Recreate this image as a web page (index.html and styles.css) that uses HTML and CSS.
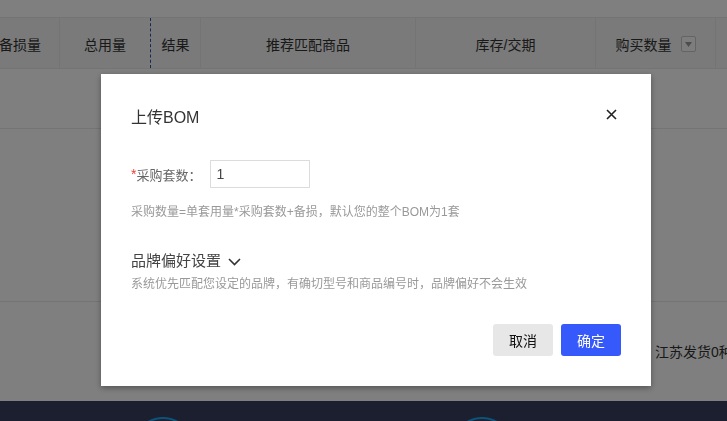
FILE: index.html
```html
<!DOCTYPE html>
<html lang="zh">
<head>
<meta charset="utf-8">
<title>上传BOM</title>
<link rel="stylesheet" href="styles.css">
</head>
<body>
<div class="page">
  <div class="topbar"></div>
  <div class="table">
    <div class="thead">
      <div class="th c1">备损量</div>
      <div class="th c2">总用量</div>
      <div class="th c3">结果</div>
      <div class="th c4">推荐匹配商品</div>
      <div class="th c5">库存/交期</div>
      <div class="th c6">购买数量 <span class="dd"><svg width="7" height="5" viewBox="0 0 7 5"><path d="M0 0H7L3.5 5Z" fill="#9a9a9a"/></svg></span></div>
      <div class="th c7"></div>
    </div>
    <div class="row r1"></div>
    <div class="row r2"></div>
    <div class="row r3"><span class="ship">江苏发货0种</span></div>
  </div>
  <div class="footer">
    <span class="ring"></span>
    <span class="ring"></span>
  </div>
</div>

<div class="mask"></div>
<div class="modal">
  <div class="m-head">
    <div class="m-title">上传BOM</div>
    <button class="m-close" aria-label="关闭"><svg width="11" height="11" viewBox="0 0 11 11"><path d="M1 1L10 10M10 1L1 10" stroke="#222" stroke-width="1.6" fill="none"/></svg></button>
  </div>
  <div class="m-field">
    <span class="req">*</span><span class="lbl">采购套数：</span>
    <div class="inp">1</div>
  </div>
  <div class="hint h1">采购数量=单套用量*采购套数+备损，默认您的整个BOM为1套</div>
  <div class="brand">品牌偏好设置<svg class="chev" width="13" height="8" viewBox="0 0 13 8"><path d="M1 1L6.5 6.5L12 1" stroke="#333" stroke-width="1.6" fill="none"/></svg></div>
  <div class="hint h2">系统优先匹配您设定的品牌，有确切型号和商品编号时，品牌偏好不会生效</div>
  <div class="m-foot">
    <button class="btn cancel">取消</button>
    <button class="btn ok">确定</button>
  </div>
</div>
</body>
</html>
```
FILE: styles.css
```css
* { box-sizing: border-box; }
html, body { margin: 0; padding: 0; }
body {
  font-family: "Liberation Sans", "Noto Sans CJK SC", sans-serif;
  color: #333;
  background: #fff;
  overflow: hidden;
  width: 727px;
  height: 421px;
}
.page { width: 727px; height: 421px; overflow: hidden; }
.topbar { height: 17px; background: #fff; }
.table { width: 760px; }
.thead {
  display: flex;
  height: 52px;
  background: #f4f4f4;
  border-top: 1px solid #e8e8e8;
  border-bottom: 1px solid #e8e8e8;
}
.th {
  display: flex;
  align-items: center;
  justify-content: center;
  font-size: 14px;
  color: #333;
  white-space: nowrap;
  border-right: 1px solid #e8e8e8;
  padding-top: 2px;
  flex: none;
}
.c1 { width: 60px; justify-content: flex-end; padding-right: 18px; }
.c2 { width: 91px; border-right: 1px dashed #2a4fb0; }
.c3 { width: 50px; }
.c4 { width: 215px; }
.c5 { width: 180px; }
.c6 { width: 120px; }
.c7 { flex: 1; border-right: none; }
.dd {
  width: 15px;
  height: 16px;
  margin-left: 9px;
  border: 1px solid #c8c8c8;
  border-radius: 2px;
  background: #fafafa;
  display: inline-flex;
  align-items: center;
  justify-content: center;
}
.row { border-bottom: 1px solid #e8e8e8; background: #fff; }
.r1 { height: 60px; }
.r2 { height: 173px; }
.r3 { height: 99px; border-bottom: none; display: flex; align-items: flex-start; overflow: hidden; width: 727px; }
.ship {
  margin-left: 655px;
  margin-top: 41px;
  font-size: 14px;
  line-height: 18px;
  color: #333;
  white-space: nowrap;
}
.footer {
  height: 20px;
  overflow: hidden;
  background: #393e5f;
  display: flex;
  padding-left: 133px;
  padding-top: 16px;
  gap: 259px;
}
.ring {
  width: 60px;
  height: 60px;
  border-radius: 50%;
  border: 2px solid #17a6f0;
  flex: none;
}
.mask {
  position: fixed;
  inset: 0;
  background: rgba(0, 0, 0, 0.5);
}
.modal {
  position: fixed;
  left: 101px;
  top: 74px;
  width: 550px;
  height: 312px;
  background: #fff;
  box-shadow: 0 2px 6px rgba(0, 0, 0, 0.35);
  padding: 33px 30px 30px 30px;
  display: flex;
  flex-direction: column;
}
.m-head {
  display: flex;
  justify-content: space-between;
  align-items: flex-start;
  height: 22px;
}
.m-title { font-size: 16px; line-height: 22px; color: #333; }
.m-close {
  width: 20px;
  height: 20px;
  margin-top: -3px;
  padding: 0;
  border: none;
  background: none;
  display: flex;
  align-items: center;
  justify-content: center;
}
.m-field {
  display: flex;
  align-items: center;
  margin-top: 31px;
  height: 28px;
}
.req { color: #f03a3a; font-size: 14px; width: 5.5px; }
.lbl { font-size: 13px; color: #666; }
.inp {
  margin-left: 8px;
  width: 100px;
  height: 28px;
  border: 1px solid #dcdcdc;
  font-size: 14px;
  line-height: 26px;
  padding-left: 6px;
  color: #444;
}
.hint { font-size: 12px; line-height: 18px; color: #999; white-space: nowrap; }
.h1 { margin-top: 15px; }
.brand {
  margin-top: 30px;
  font-size: 15px;
  line-height: 20px;
  color: #444;
  display: flex;
  align-items: center;
}
.chev { margin-left: 7px; margin-top: 1px; }
.h2 { margin-top: 4px; }
.m-foot {
  margin-top: auto;
  display: flex;
  justify-content: flex-end;
  gap: 8px;
}
.btn {
  width: 60px;
  height: 32px;
  border: none;
  border-radius: 3px;
  font-family: inherit;
  font-size: 14px;
  padding: 0;
}
.cancel { background: #e7e7e7; color: #111; }
.ok { background: #3659fb; color: #fff; }
```
